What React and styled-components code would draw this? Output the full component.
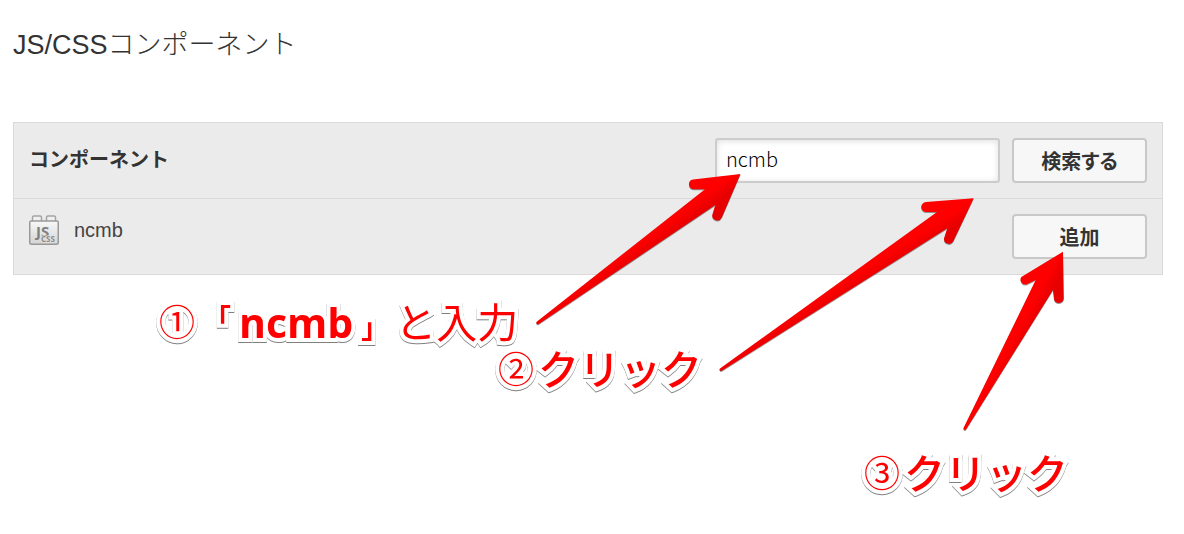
import React from "react";
import styled, { createGlobalStyle } from "styled-components";

const latin = `"Liberation Sans", "Noto Sans CJK JP", sans-serif`;
const japanese = `"Noto Sans CJK JP", sans-serif`;

const GlobalStyle = createGlobalStyle`
  * { box-sizing: border-box; }
  body {
    margin: 0;
    background: #fff;
    color: #333;
    font-family: ${latin};
  }
`;

const Page = styled.main`
  position: relative;
  min-height: 100vh;
  padding: 25px 21px 24px 13px;
`;

const Title = styled.h1`
  margin: 0 0 57px;
  font-size: 27px;
  line-height: 40px;
  font-weight: 300;
`;

const Panel = styled.section`
  border: 1px solid #dadada;
  background: #ebebeb;
`;

const Row = styled.div`
  display: flex;
  align-items: flex-start;
  gap: 12px;
  padding: 15px;
  & + & {
    border-top: 1px solid #dadada;
  }
`;

const Heading = styled.h2`
  flex: 1;
  margin: 0;
  font: 700 20px/42px ${japanese};
`;

const SearchForm = styled.form`
  display: flex;
  gap: 12px;
`;

const SearchInput = styled.input`
  width: 285px;
  height: 45px;
  padding: 0 9px 4px;
  border: 2px solid #ccc;
  border-radius: 3px;
  background: #fff;
  box-shadow: inset 0 1px 6px #ddd;
  color: #000;
  font: 300 20px ${japanese};
  outline: none;
`;

const Button = styled.button`
  width: 135px;
  height: 45px;
  padding: 0;
  border: 2px solid #c8c8c8;
  border-radius: 4px;
  background: #f7f7f7;
  color: #333;
  font: 700 20px/40px ${japanese};
  font-feature-settings: "palt";
`;

const Component = styled.div`
  flex: 1;
  display: flex;
  align-items: center;
  gap: 15px;
  color: #444;
  font-size: 20px;
  line-height: 32px;
`;

const Overlay = styled.svg`
  position: absolute;
  left: 0;
  top: 0;
  pointer-events: none;
  filter: drop-shadow(0 1px 0 rgba(0, 0, 0, 0.4));
`;

const Note = styled.p`
  position: absolute;
  left: ${(p) => p.$left}px;
  top: ${(p) => p.$top}px;
  margin: 0;
  color: #f00;
  font: ${(p) => p.$weight || 500} 41px/48px ${japanese};
  white-space: nowrap;
  -webkit-text-stroke: 8px #fff;
  paint-order: stroke fill;
  filter: drop-shadow(0 1px 0 rgba(0, 0, 0, 0.5));
  pointer-events: none;
`;

const Digit = styled.span`
  margin-right: 4px;
  font-size: 36px;
  font-weight: 400;
  line-height: 1;
  vertical-align: 2px;
`;

const Bracket = styled.span`
  margin: ${(p) => (p.$open ? "0 8px 0 4px" : "0 6px 0 8px")};
  font-size: 28px;
  font-weight: 700;
  line-height: 1;
  vertical-align: ${(p) => (p.$open ? "8px" : "baseline")};
`;

const Keyword = styled.b`
  font-family: "Open Sans", sans-serif;
  font-weight: 700;
  line-height: 1;
`;

function PackageIcon() {
  return (
    <svg width="30" height="30" viewBox="0 0 30 30" aria-hidden="true">
      <defs>
        <linearGradient id="brick" x1="0" y1="0" x2="0" y2="1">
          <stop offset="0" stopColor="#f8f8f8" />
          <stop offset="1" stopColor="#d4d4d4" />
        </linearGradient>
      </defs>
      <path d="M3.500 7V2.500Q3.500 1 5 1H11Q12.500 1 12.500 2.500V7M17.500 7V2.500Q17.500 1 19 1H25Q26.500 1 26.500 2.500V7" fill="#f0f0f0" stroke="#a4a4a4" strokeWidth="1.500" />
      <rect x="0.750" y="6" width="28.500" height="23.200" rx="1.500" fill="url(#brick)" stroke="#999" strokeWidth="1.500" />
      <text x="7" y="22" fontFamily="Open Sans" fontSize="15" fontWeight="700" fill="#808080">JS</text>
      <text x="12" y="27" fontFamily="Open Sans" fontSize="8" fontWeight="700" fill="#8a8a8a" stroke="#e4e4e4" strokeWidth="1.500" paintOrder="stroke">CSS</text>
    </svg>
  );
}

const arrows = [
  {
    id: "toInput",
    d: "M537 321.500L705 189.300H694A5 5 0 0 1 693 179.400L740.500 174L721.800 217.500A5 5 0 0 1 712.300 215L715.300 205L538.800 324A1.500 1.500 0 0 1 537 321.500Z",
    from: [627, 251],
    to: [635, 262],
  },
  {
    id: "toSearch",
    d: "M720 368.500L937 212H926.500A5 5 0 0 1 926 202L973.700 198.300L953.200 241.500A5 5 0 0 1 944 238.500L947.300 228.300L721.500 371A1.500 1.500 0 0 1 720 368.500Z",
    from: [845, 281],
    to: [852, 292],
  },
  {
    id: "toAdd",
    d: "M963.500 428L1035.700 280L1026.500 284.500A5 5 0 0 1 1021.300 277L1063 251.700L1063.700 299A5 5 0 0 1 1054.200 300L1053 290L966 429.500A1.500 1.500 0 0 1 963.500 428Z",
    from: [1009, 345],
    to: [1020, 351],
  },
];

function Arrows() {
  return (
    <Overlay width="1100" height="440" aria-hidden="true">
      {arrows.map(({ id, d, from, to }) => (
        <g key={id}>
          <linearGradient id={id} gradientUnits="userSpaceOnUse" x1={from[0]} y1={from[1]} x2={to[0]} y2={to[1]}>
            <stop offset="0" stopColor="#f00" />
            <stop offset="1" stopColor="#e60000" />
          </linearGradient>
          <path d={d} fill={`url(#${id})`} />
        </g>
      ))}
    </Overlay>
  );
}

export default function App() {
  return (
    <Page>
      <GlobalStyle />
      <Title>JS/CSSコンポーネント</Title>
      <Panel>
        <Row>
          <Heading>
            <label htmlFor="component-search">コンポーネント</label>
          </Heading>
          <SearchForm onSubmit={(e) => e.preventDefault()}>
            <SearchInput id="component-search" type="text" defaultValue="ncmb" />
            <Button type="submit">検索する</Button>
          </SearchForm>
        </Row>
        <Row>
          <Component>
            <PackageIcon />
            <span>ncmb</span>
          </Component>
          <Button type="button">追加</Button>
        </Row>
      </Panel>
      <Note $left={159} $top={296} $weight={400}>
        <Digit>①</Digit>
        <Bracket $open>「</Bracket>
        <Keyword>ncmb</Keyword>
        <Bracket>」</Bracket>と入力
      </Note>
      <Note $left={498} $top={343}>
        <Digit>②</Digit>クリック
      </Note>
      <Note $left={864} $top={447}>
        <Digit>③</Digit>クリック
      </Note>
      <Arrows />
    </Page>
  );
}
